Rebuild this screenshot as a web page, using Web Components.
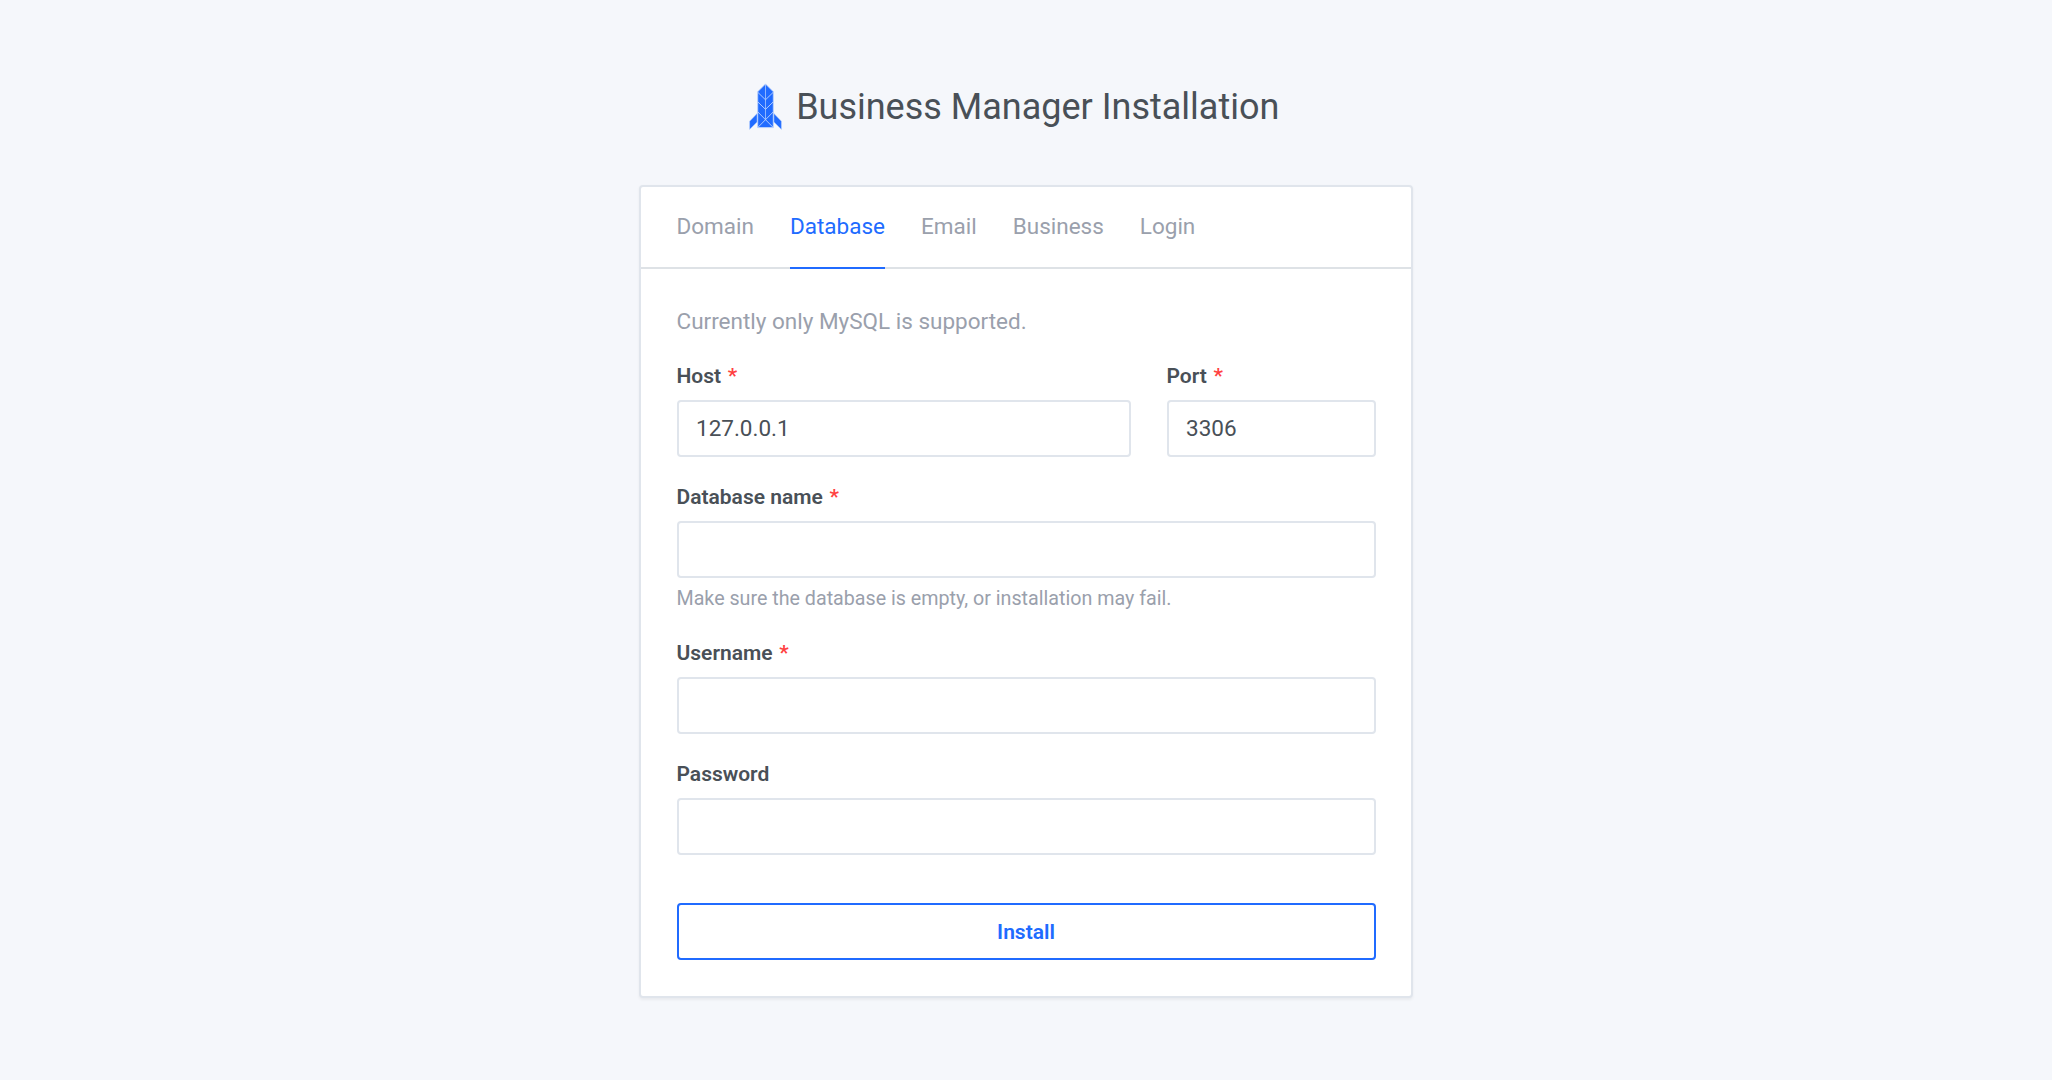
<!DOCTYPE html>
<html lang="en">
<head>
<meta charset="utf-8">
<title>Business Manager Installation</title>
<style>
  body { margin: 0; min-height: 1080px; background: #f5f7fb; color: #495057; font: 400 22.5px/34px Roboto, "Liberation Sans", sans-serif; }
</style>
</head>
<body>
<install-page>
  <brand-title slot="header">Business Manager Installation</brand-title>
  <setup-card>
    <tab-item slot="tabs">Domain</tab-item>
    <tab-item slot="tabs" active>Database</tab-item>
    <tab-item slot="tabs">Email</tab-item>
    <tab-item slot="tabs">Business</tab-item>
    <tab-item slot="tabs">Login</tab-item>
    <intro-text>Currently only MySQL is supported.</intro-text>
    <field-row>
      <form-field required value="127.0.0.1">Host</form-field>
      <form-field required value="3306">Port</form-field>
    </field-row>
    <form-field required>Database name<span slot="hint">Make sure the database is empty, or installation may fail.</span></form-field>
    <form-field required>Username</form-field>
    <form-field type="password">Password</form-field>
    <outline-button>Install</outline-button>
  </setup-card>
</install-page>
<script>
const define = (name, html, setup) => {
  const template = document.createElement('template');
  template.innerHTML = html;
  customElements.define(name, class extends HTMLElement {
    constructor() {
      super();
      this.attachShadow({ mode: 'open' }).append(template.content.cloneNode(true));
    }
    connectedCallback() { if (setup) setup(this, this.shadowRoot); }
  });
};

define('install-page', `
  <style>
    :host { display: flex; flex-direction: column; align-items: center; }
    main { width: 774px; }
  </style>
  <slot name="header"></slot>
  <main><slot></slot></main>`);

define('brand-title', `
  <style>
    :host { display: flex; align-items: center; padding: 80px 23.5px 51px 0; }
    svg { display: block; width: 33px; height: 48px; margin-right: 14px; }
    h1 { margin: 0; font-size: 36px; line-height: 54px; font-weight: 400; white-space: nowrap; }
  </style>
  <svg viewBox="0 0 33 48" aria-hidden="true">
    <g fill="#206bff" stroke="#bdd4fd" stroke-width=".9">
      <path d="M16.5 .9 24.3 8.7V44.6H8.7V8.7Z"/>
      <path stroke-width=".5" d="M8.1 30.4V39.1L.6 46.4V38.2Z M24.9 30.4V39.1L32.4 46.4V38.2Z"/>
      <path fill="none" d="M8.7 9.2 16.5 16.8 24.3 9.2 M8.7 18.8 16.5 26.4 24.3 18.8 M8.7 28.8 24.3 44.6 M24.3 28.8 8.7 44.6"/>
      <path fill="none" stroke-width=".7" d="M16.5 .9V36.6"/>
    </g>
  </svg>
  <h1><slot></slot></h1>`);

define('setup-card', `
  <style>
    :host { display: block; box-sizing: border-box; border: 2px solid #e0e5ec; border-radius: 4px; background: #fff; box-shadow: 0 1.5px 3px rgba(0,0,0,.05); }
    nav { display: flex; gap: 36px; height: 80px; padding: 0 35.5px; border-bottom: 2px solid #dee2e6; }
    section { padding: 35px 35.5px 36px; }
  </style>
  <nav><slot name="tabs"></slot></nav>
  <section><slot></slot></section>`);

define('tab-item', `
  <style>
    :host { display: block; box-sizing: border-box; height: 82px; padding-top: 22px; line-height: 34px; color: #9aa0ac; border-bottom: 2px solid transparent; }
    :host([active]) { color: #206bff; border-color: #206bff; }
  </style>
  <slot></slot>`);

define('intro-text', `
  <style>:host { display: block; margin-bottom: 22px; color: #9aa0ac; }</style>
  <slot></slot>`);

define('field-row', `
  <style>:host { display: grid; grid-template-columns: 454px 209px; gap: 36px; }</style>
  <slot></slot>`);

define('form-field', `
  <style>
    :host { display: block; margin-bottom: 24px; }
    label { display: block; height: 32px; margin-bottom: 8px; font-size: 21px; line-height: 32px; font-weight: 600; }
    .mark { display: none; margin-left: 6.75px; color: #ff4141; }
    :host([required]) .mark { display: inline; }
    input { display: block; box-sizing: border-box; width: 100%; height: 57px; margin: 0; padding: 0 17.5px 2px; border: 2px solid #e0e5ec; border-radius: 4px; background: #fff; color: #495057; font: inherit; outline: 0; }
    ::slotted([slot="hint"]) { display: block; margin-top: 6px; font-size: 19.6875px; line-height: 29px; color: #9aa0ac; }
  </style>
  <label for="control"><slot></slot><span class="mark">*</span></label>
  <input id="control">
  <slot name="hint"></slot>`, (host, root) => {
    const input = root.querySelector('input');
    input.type = host.getAttribute('type') || 'text';
    input.value = host.getAttribute('value') || '';
  });

define('outline-button', `
  <style>
    :host { display: block; margin-top: 48px; }
    button { display: block; box-sizing: border-box; width: 100%; height: 57px; padding: 0; border: 2px solid #206bff; border-radius: 4px; background: #fff; color: #206bff; font: 600 21px/32px Roboto, sans-serif; }
  </style>
  <button type="button"><slot></slot></button>`);
</script>
</body>
</html>
